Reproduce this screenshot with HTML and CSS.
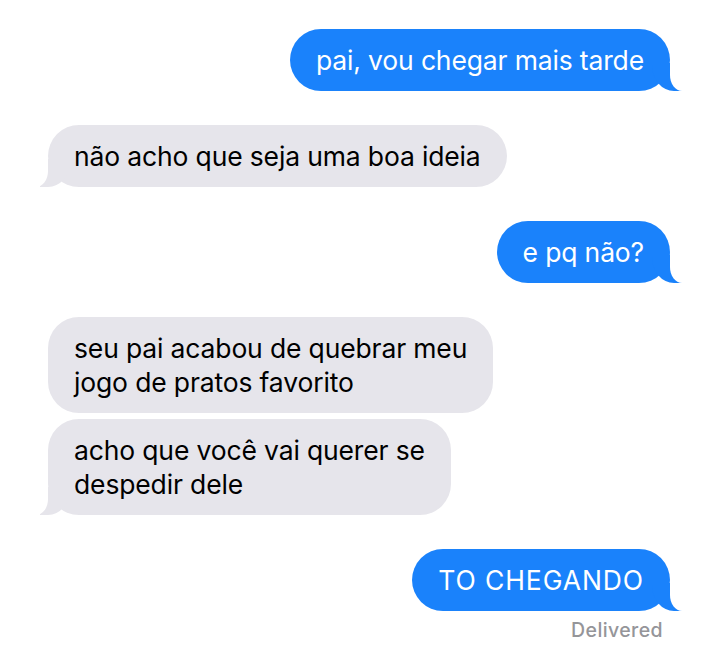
FILE: index.html
```html
<!DOCTYPE html>
<html lang="pt">
<head>
<meta charset="utf-8">
<title>Mensagens</title>
<link rel="stylesheet" href="styles.css">
</head>
<body>
<div class="thread">
  <div class="bubble sent tail gap">pai, vou chegar mais tarde</div>
  <div class="bubble received tail gap">não acho que seja uma boa ideia</div>
  <div class="bubble sent tail gap">e pq não?</div>
  <div class="bubble received gap">seu pai acabou de quebrar meu<br>jogo de pratos favorito</div>
  <div class="bubble received tail near">acho que você vai querer se<br>despedir dele</div>
  <div class="bubble sent tail gap caps">TO CHEGANDO</div>
  <div class="status">Delivered</div>
</div>
</body>
</html>
```

FILE: styles.css
```css
html, body {
  margin: 0;
  padding: 0;
  background: #ffffff;
}

body {
  font-family: "Inter", "Liberation Sans", Arial, sans-serif;
  width: 720px;
  height: 663px;
  overflow: hidden;
}

.thread {
  display: flex;
  flex-direction: column;
  padding: 29px 50px 0 48px;
}

.bubble {
  position: relative;
  font-size: 26.5px;
  line-height: 34px;
  padding: 14px 26px 14px;
  border-radius: 31px;
  max-width: 480px;
  letter-spacing: -0.15px;
}

.caps { letter-spacing: 0.9px; }

.gap { margin-top: 34px; }
.thread > .bubble:first-child { margin-top: 0; }
.near { margin-top: 6px; }

.sent {
  align-self: flex-end;
  background: #1a82fb;
  color: #ffffff;
}

.received {
  align-self: flex-start;
  background: #e6e5eb;
  color: #000000;
}

.tail::before,
.tail::after {
  content: "";
  position: absolute;
  bottom: 0;
  height: 28px;
}

.sent.tail::before {
  right: -12px;
  width: 30px;
  background: #1a82fb;
  border-bottom-left-radius: 22px 26px;
  z-index: 0;
}

.sent.tail::after {
  right: -18px;
  width: 18px;
  background: #ffffff;
  border-bottom-left-radius: 12px 16px;
  z-index: 1;
}

.received.tail::before {
  left: -8px;
  width: 30px;
  background: #e6e5eb;
  border-bottom-right-radius: 22px 26px;
  z-index: 0;
}

.received.tail::after {
  left: -18px;
  width: 18px;
  background: #ffffff;
  border-bottom-right-radius: 12px 16px;
  z-index: 1;
}

.status {
  align-self: flex-end;
  margin-right: 7px;
  margin-top: 7px;
  font-size: 19.5px;
  line-height: 24px;
  font-weight: 500;
  letter-spacing: 0.4px;
  color: #959599;
}
```
